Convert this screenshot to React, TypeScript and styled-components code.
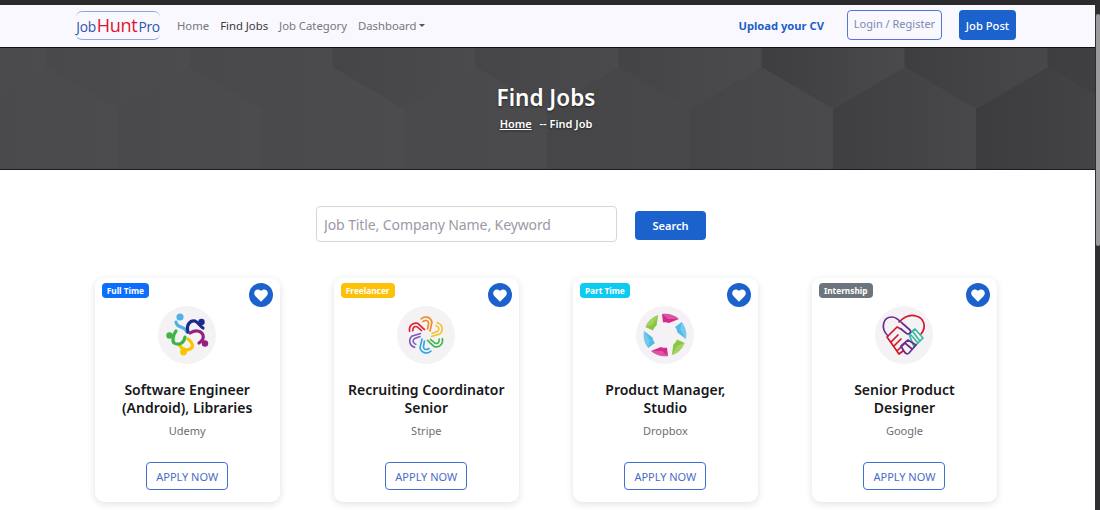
import React from "react";
import styled, { createGlobalStyle } from "styled-components";

const Global = createGlobalStyle`
  html, body { margin: 0; padding: 0; background: #fff; overflow: hidden; }
  body { font-family: "Noto Sans", "Open Sans", sans-serif; }
  * { box-sizing: border-box; }
`;

const Shell = styled.div`
  width: 1100px;
  height: 510px;
  display: flex;
  overflow: hidden;
  background: #2b2a2c;
`;
const Page = styled.div`
  width: 1095px;
  height: 510px;
  display: flex;
  flex-direction: column;
  padding-top: 5px;
  overflow: hidden;
`;
const Scrollbar = styled.div`
  width: 5px;
  background: #2f2e30;
  padding: 14px 0 0 1px;
`;
const Thumb = styled.div`
  width: 4px;
  height: 232px;
  background: #9b9a9c;
  border-radius: 2px;
`;
const Nav = styled.nav`
  height: 43px;
  flex: none;
  background: #f8f8fe;
  border-bottom: 1px solid #111;
  display: flex;
  align-items: center;
  padding: 0 79px 2px 76px;
`;
const Brand = styled.div`
  width: 84px;
  height: 29px;
  flex: none;
  margin-top: 1px;
  border-top: 1px solid #8ea6e4;
  border-bottom: 1px solid #8ea6e4;
  border-radius: 6px;
  display: flex;
  align-items: baseline;
  justify-content: center;
  font-family: "Open Sans", sans-serif;
  font-size: 13.8px;
  line-height: 26px;
  color: #2f55b0;
  letter-spacing: -0.3px;
`;
const BrandRed = styled.span`
  color: #e0142e;
  font-size: 18px;
  margin: 0 1px;
`;
const Links = styled.div`
  display: flex;
  gap: 11px;
  margin-left: 17px;
  font-size: 11.3px;
`;
const NavLink = styled.a<{ $active?: boolean }>`
  color: ${(p) => (p.$active ? "#3a3a3c" : "#77777a")};
  white-space: nowrap;
  display: flex;
  align-items: center;
`;
const Caret = styled.span`
  width: 0;
  height: 0;
  margin-left: 2px;
  border-left: 3.5px solid transparent;
  border-right: 3.5px solid transparent;
  border-top: 3.5px solid #555;
`;
const RightGroup = styled.div`
  margin-left: auto;
  display: flex;
  align-items: center;
`;
const Upload = styled.a`
  color: #1c5fc9;
  font-weight: 700;
  font-size: 11.2px;
  margin-right: 23px;
  white-space: nowrap;
`;
const LoginBtn = styled.a`
  width: 95px;
  height: 30px;
  border: 1px solid #4f78d8;
  border-radius: 4px;
  color: #7c8ab0;
  font-size: 11px;
  display: flex;
  justify-content: center;
  padding-top: 5px;
  margin-right: 17px;
`;
const PostBtn = styled.a`
  width: 57px;
  height: 30px;
  background: #1c62cd;
  border-radius: 4px;
  color: #fff;
  font-size: 11.2px;
  font-weight: 500;
  display: flex;
  align-items: center;
  justify-content: center;
`;
const Hero = styled.header`
  position: relative;
  height: 122px;
  flex: none;
  background: #4a494b;
  border-bottom: 1px solid #1c1b1d;
  overflow: hidden;
  display: flex;
  flex-direction: column;
  align-items: center;
  padding-right: 3px;
  color: #fff;
  text-shadow: 0 1px 2px rgba(0, 0, 0, 0.5);
`;
const HeroArt = styled.svg`
  position: absolute;
  inset: 0;
`;
const HeroTitle = styled.h1`
  position: relative;
  margin: 33px 0 0;
  font-size: 22.5px;
  line-height: 33px;
  font-weight: 600;
`;
const Crumbs = styled.div`
  position: relative;
  margin-top: 1px;
  font-size: 11px;
  font-weight: 600;
  line-height: 17px;
`;
const CrumbLink = styled.a`
  text-decoration: underline;
  margin-right: 5px;
`;
const Main = styled.main`
  flex: 1;
  background: #fff;
  padding-top: 36px;
`;
const SearchRow = styled.form`
  display: flex;
  align-items: center;
  gap: 18px;
  margin-left: 316px;
`;
const SearchInput = styled.input`
  width: 301px;
  height: 36px;
  border: 1px solid #d8d6da;
  border-radius: 4px;
  padding: 0 7px;
  font: 400 14px "Noto Sans", sans-serif;
  letter-spacing: -0.1px;
  background: #fff;
  &::placeholder {
    color: #9c99a6;
    opacity: 1;
  }
`;
const SearchBtn = styled.button`
  width: 71px;
  height: 29px;
  margin-top: 2px;
  border: 0;
  border-radius: 4px;
  background: #1c62cd;
  color: #fff;
  font: 600 11px "Noto Sans", sans-serif;
`;
const Cards = styled.section`
  display: grid;
  grid-template-columns: repeat(4, 185px);
  column-gap: 54.1px;
  margin: 36px 0 0 94.7px;
`;
const Card = styled.article`
  position: relative;
  height: 224px;
  background: #fff;
  border-radius: 9px;
  box-shadow: 0 2px 7px rgba(40, 40, 60, 0.14);
  display: flex;
  flex-direction: column;
  align-items: center;
  padding-top: 28px;
`;
const Badge = styled.span<{ $bg: string }>`
  position: absolute;
  left: 7px;
  top: 5px;
  height: 15px;
  padding: 0 5px;
  border-radius: 4px;
  background: ${(p) => p.$bg};
  color: #fff;
  font-size: 8.3px;
  font-weight: 700;
  line-height: 15px;
`;
const Heart = styled.span`
  position: absolute;
  right: 7px;
  top: 5px;
  width: 24px;
  height: 24px;
  border-radius: 50%;
  background: #1c62cd;
  display: flex;
  align-items: center;
  justify-content: center;
`;
const LogoCircle = styled.div`
  width: 58px;
  height: 58px;
  flex: none;
  border-radius: 50%;
  background: #f4f2f5;
  display: flex;
`;
const Title = styled.h3`
  margin: 17px 0 0;
  padding: 0 12px;
  height: 35px;
  font-size: 14px;
  line-height: 17.5px;
  font-weight: 600;
  text-align: center;
  color: #17171a;
`;
const Company = styled.div`
  margin-top: 6px;
  font-size: 11px;
  line-height: 17px;
  color: #6e6d72;
`;
const Apply = styled.a`
  width: 82px;
  height: 28px;
  margin-top: 23px;
  border: 1px solid #3f6fd0;
  border-radius: 4px;
  color: #4a6cc4;
  font-size: 11px;
  display: flex;
  align-items: center;
  justify-content: center;
`;

const lowerShades: Record<number, [string, string]> = {
  [-1]: ["#4a494b", "#4b4a4c"],
  0: ["#464547", "#48474a"],
  1: ["#454446", "#4a494c"],
  2: ["#3f3e40", "#48474a"],
  3: ["#3c3b3d", "#454446"],
};
const upperShades: Record<number, [string, string]> = {
  [-2]: ["#49484a", "#4b4a4c"],
  [-1]: ["#454446", "#4b4a4c"],
  0: ["#464547", "#4a494b"],
  1: ["#444345", "#4b4a4c"],
  2: ["#3e3d3f", "#4a494b"],
  3: ["#3e3d3f", "#48474a"],
  4: ["#3e3d3f", "#434244"],
};

const hexes: { d: string; from: string; to: string }[] = [];
for (let k = -4; k < 5; k++) {
  const x = 547 + 143 * k;
  const low = lowerShades[k] ?? ["#4a494b", "#4c4b4d"];
  const up = upperShades[k] ?? ["#49484a", "#4c4b4d"];
  hexes.push({
    d: `M${x} 122 V61 L${x + 71.5} 19 L${x + 143} 61 V122 Z`,
    from: low[0],
    to: low[1],
  });
  hexes.push({
    d: `M${x - 71.5} 0 V19 L${x} 61 L${x + 71.5} 19 V0 Z`,
    from: up[0],
    to: up[1],
  });
}

const HeroBackground = () => (
  <HeroArt width="1095" height="121" viewBox="0 0 1095 121" aria-hidden="true">
    <defs>
      {hexes.map((h, i) => (
        <linearGradient key={i} id={`hx${i}`} x1="0" x2="1" y1="0" y2="0">
          <stop offset="0" stopColor={h.from} />
          <stop offset="1" stopColor={h.to} />
        </linearGradient>
      ))}
    </defs>
    {hexes.map((h, i) => (
      <path key={i} d={h.d} fill={`url(#hx${i})`} />
    ))}
  </HeroArt>
);

const PeopleLogo = () => (
  <svg width="58" height="58" viewBox="-29 -29 58 58" fill="none" strokeLinecap="round">
    <g strokeWidth="3.2">
      <path d="M-11-13C-10-6-3-10 0-3" stroke="#4db2ea" />
      <path d="M1-3C-1-10 3-15 8-14C11-13 13-9 16-7" stroke="#1b2a8c" />
      <path d="M3-2C8-5 14-5 16 0C17 3 15 6 12 8" stroke="#94207f" />
      <path d="M1 4C6 8 7 12 3 14C-1 16-5 14-7 11" stroke="#f7c600" />
      <path d="M-2 2C-3 8-8 11-13 8C-15 6-14 0-11-4" stroke="#3db542" />
    </g>
    <circle cx="-7" cy="-18" r="3.6" fill="#4db2ea" />
    <circle cx="14.5" cy="-13" r="3.2" fill="#1b2a8c" />
    <circle cx="18" cy="8.5" r="3.2" fill="#94207f" />
    <circle cx="-3.5" cy="17" r="3.4" fill="#f7c600" />
    <circle cx="-17.5" cy="0.5" r="3.2" fill="#3db542" />
  </svg>
);

const flowerColors = ["#ef8a1d", "#f4c12c", "#3fb54a", "#2aa6e0", "#7a5bb8", "#e5202e"];
const FlowerLogo = () => (
  <svg width="58" height="58" viewBox="-29 -29 58 58" fill="none" strokeLinecap="round">
    {flowerColors.map((c, i) => (
      <g key={c} transform={`rotate(${i * 60})`} stroke={c} strokeWidth="1.6">
        <path d="M-5-16C-2-19 4-19 6-13L4-4" />
        <path d="M-3-13.5C0-15.5 2-14.5 2.6-12L1.6-6" />
      </g>
    ))}
  </svg>
);

const ringColors = ["#d42a8c", "#52bce8", "#8cc63f", "#d42a8c", "#52bce8", "#8cc63f"];
const RingLogo = () => (
  <svg width="58" height="58" viewBox="-29 -29 58 58">
    {ringColors.map((c, i) => (
      <g key={i} transform={`rotate(${i * 60})`}>
        <path d="M-3-21C3-22 10-20 14-16L4-12C2-13 0-13-2-12.7Z" fill={c} />
        <path d="M-3-21C3-22 10-20 14-16L3-16Z" fill="#fff" fillOpacity="0.2" />
      </g>
    ))}
  </svg>
);

const HandshakeLogo = () => (
  <svg width="58" height="58" viewBox="-29 -29 58 58" fill="none" strokeLinecap="round" strokeLinejoin="round" strokeWidth="1.7">
    <path d="M-5-13C0-18 6-21 12-19C20-17 23-8 17-1" stroke="#d8142a" />
    <path d="M-3-6L-7-8L-17 2L-5 19L-1 16M-13 7L-6 0M-10 11L-3 4M-6 15L0 9" stroke="#d8142a" />
    <path d="M5-1L11-6L19 3L10 12ZM9-3L16 6M7 0L14 8" stroke="#3cb8a0" />
    <path d="M-16 1C-24-7-21-18-12-18C-8-18-5-15-2-12L6-5C8-2 4 0 2-2L-3-6" stroke="#6a2b8e" />
    <path d="M-3 11L4 5L12 10L5 18C3 20 1 19-3 11ZM1 8L8 14" stroke="#6a2b8e" />
  </svg>
);

const HeartIcon = () => (
  <svg width="14" height="13" viewBox="0 0 24 22" fill="#fff">
    <path d="M12 21.5 2.6 12.2C-.4 9.2-.4 5 2.3 2.4 5-.2 9.2 0 12 3.2 14.8 0 19-.2 21.7 2.4c2.7 2.6 2.7 6.8-.3 9.8Z" />
  </svg>
);

const jobs = [
  { badge: "Full Time", bg: "#0d6efd", title: "Software Engineer (Android), Libraries", company: "Udemy", logo: <PeopleLogo /> },
  { badge: "Freelancer", bg: "#ffc107", title: "Recruiting Coordinator Senior", company: "Stripe", logo: <FlowerLogo /> },
  { badge: "Part Time", bg: "#0dcaf0", title: "Product Manager, Studio", company: "Dropbox", logo: <RingLogo /> },
  { badge: "Internship", bg: "#6c757d", title: "Senior Product Designer", company: "Google", logo: <HandshakeLogo /> },
];

export default function App() {
  return (
    <Shell>
      <Global />
      <Page>
        <Nav>
          <Brand>
            Job<BrandRed>Hunt</BrandRed>Pro
          </Brand>
          <Links>
            <NavLink>Home</NavLink>
            <NavLink $active>Find Jobs</NavLink>
            <NavLink>Job Category</NavLink>
            <NavLink>
              Dashboard<Caret />
            </NavLink>
          </Links>
          <RightGroup>
            <Upload>Upload your CV</Upload>
            <LoginBtn>Login / Register</LoginBtn>
            <PostBtn>Job Post</PostBtn>
          </RightGroup>
        </Nav>
        <Hero>
          <HeroBackground />
          <HeroTitle>Find Jobs</HeroTitle>
          <Crumbs>
            <CrumbLink>Home</CrumbLink> -- Find Job
          </Crumbs>
        </Hero>
        <Main>
          <SearchRow onSubmit={(e) => e.preventDefault()}>
            <SearchInput placeholder="Job Title, Company Name, Keyword" />
            <SearchBtn type="button">Search</SearchBtn>
          </SearchRow>
          <Cards>
            {jobs.map((j) => (
              <Card key={j.company}>
                <Badge $bg={j.bg}>{j.badge}</Badge>
                <Heart>
                  <HeartIcon />
                </Heart>
                <LogoCircle>{j.logo}</LogoCircle>
                <Title>{j.title}</Title>
                <Company>{j.company}</Company>
                <Apply>APPLY NOW</Apply>
              </Card>
            ))}
          </Cards>
        </Main>
      </Page>
      <Scrollbar>
        <Thumb />
      </Scrollbar>
    </Shell>
  );
}
